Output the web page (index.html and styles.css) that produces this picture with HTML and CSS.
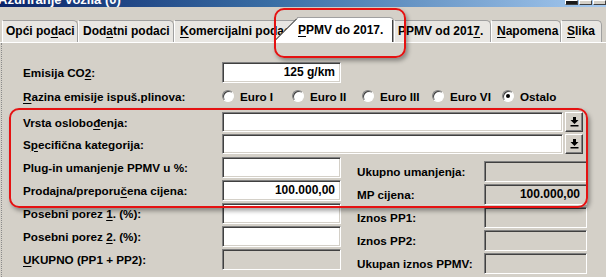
FILE: index.html
```html
<!DOCTYPE html>
<html lang="hr">
<head>
  <meta charset="UTF-8">
  <title>Ažuriranje vozila</title>
  <link rel="stylesheet" href="styles.css">
</head>
<body>

<div class="naslov">
  <span class="naslov-tekst">Ažuriranje vozila (0)</span>
  <div class="prozor-gumbi"><span></span><span></span><span></span></div>
</div>

<div class="kartice">
  <div class="kartica k1">Opći po<u>d</u>aci</div>
  <div class="kartica k2">Dod<u>a</u>tni podaci</div>
  <div class="kartica k3"><u>K</u>omercijalni podaci</div>
  <div class="kartica aktivna">
    <svg class="aktivna-oblik" width="119" height="26" viewBox="0 0 119 26">
      <path d="M0 23 L22 1 L115 1 Q118 1 118 4 L118 26 L0 26 Z" fill="#fff"/>
      <path d="M0 23.5 L22 1.5" stroke="#000" stroke-width="1"/>
      <path d="M22 0.5 L115 0.5 Q118.5 0.5 118.5 4 L118.5 25" stroke="#a0a0a0" fill="none"/>
      <path d="M117.5 3 L117.5 25" stroke="#404040"/>
    </svg>
    <span class="aktivna-tekst"><u>P</u>PMV do 2017.</span>
  </div>
  <div class="kartica k5">PPMV od 201<u>7</u>.</div>
  <div class="kartica k6"><u>N</u>apomena</div>
  <div class="kartica k7"><u>S</u>lika</div>
</div>

<div class="stranica">
  <div class="red r-emisija">
    <span class="oznaka">Emisija CO<u>2</u>:</span>
    <div class="polje">125 g/km</div>
  </div>

  <div class="red r-razina">
    <span class="oznaka"><u>R</u>azina emisije ispuš.plinova:</span>
    <label class="izbor"><span class="krug"></span>Euro I</label>
    <label class="izbor"><span class="krug"></span>Euro II</label>
    <label class="izbor"><span class="krug"></span>Euro III</label>
    <label class="izbor"><span class="krug"></span>Euro VI</label>
    <label class="izbor"><span class="krug odabran"></span>Ostalo</label>
  </div>

  <div class="red r-vrsta">
    <span class="oznaka">Vrsta oslobo<u>đ</u>enja:</span>
    <div class="polje dugo"></div>
    <div class="padajuci">
      <svg width="9" height="10" viewBox="0 0 9 10"><path d="M3 0h3v3h2.5L4.5 7 0.5 3H3z"/><rect x="0.5" y="8" width="8" height="1.5"/></svg>
    </div>
  </div>

  <div class="red r-spec">
    <span class="oznaka">S<u>p</u>ecifična kategorija:</span>
    <div class="polje dugo"></div>
    <div class="padajuci">
      <svg width="9" height="10" viewBox="0 0 9 10"><path d="M3 0h3v3h2.5L4.5 7 0.5 3H3z"/><rect x="0.5" y="8" width="8" height="1.5"/></svg>
    </div>
  </div>

  <div class="donji">
    <div class="lijevi">
      <div class="red">
        <span class="oznaka">Plug-in umanjenje PPMV u %:</span>
        <div class="polje"></div>
      </div>
      <div class="red">
        <span class="oznaka">Prodajna/preporu<u>č</u>ena cijena:</span>
        <div class="polje">100.000,00</div>
      </div>
      <div class="red">
        <span class="oznaka">Posebni porez <u>1</u>. (%):</span>
        <div class="polje"></div>
      </div>
      <div class="red">
        <span class="oznaka">Posebni porez <u>2</u>. (%):</span>
        <div class="polje"></div>
      </div>
      <div class="red">
        <span class="oznaka"><u>U</u>KUPNO (PP1 + PP2):</span>
        <div class="polje sivo"></div>
      </div>
    </div>

    <div class="desni">
      <div class="red">
        <span class="oznaka uska">Ukupno umanjenja:</span>
        <div class="polje sivo kratko"></div>
      </div>
      <div class="red">
        <span class="oznaka uska">MP cijena:</span>
        <div class="polje sivo kratko">100.000,00</div>
      </div>
      <div class="red">
        <span class="oznaka uska">Iznos PP1:</span>
        <div class="polje sivo kratko"></div>
      </div>
      <div class="red">
        <span class="oznaka uska">Iznos PP2:</span>
        <div class="polje sivo kratko"></div>
      </div>
      <div class="red">
        <span class="oznaka uska">Ukupan iznos PPMV:</span>
        <div class="polje sivo kratko"></div>
      </div>
    </div>
  </div>
</div>

<div class="crveni-okvir okvir-kartica"></div>
<div class="crveni-okvir okvir-grupa"></div>

</body>
</html>
```

FILE: styles.css
```css
* {
  box-sizing: border-box;
}
body {
  margin: 0;
  width: 606px;
  height: 277px;
  overflow: hidden;
  position: relative;
  background-color: #d4d0c8;
  font-family: "Liberation Sans", Arial, sans-serif;
  font-weight: bold;
  color: #000;
}
u {
  text-decoration-thickness: 1px;
  text-underline-offset: 2px;
}

/* naslovna traka */
.naslov {
  height: 7px;
  overflow: hidden;
  display: flex;
  justify-content: space-between;
  background: linear-gradient(to right, #0a246a, #3a6ea5 45%, #a6caf0);
}
.naslov-tekst {
  color: #fff;
  font-size: 13px;
  line-height: 13px;
  margin-top: -7px;
  margin-left: -2px;
  white-space: nowrap;
}
.prozor-gumbi {
  display: flex;
  gap: 1px;
}
.prozor-gumbi span {
  width: 13px;
  height: 5px;
  background: #d4d0c8;
  border: 1px solid;
  border-color: #fff #404040 #404040 #fff;
}
.prozor-gumbi span:first-child {
  background: linear-gradient(#d4d0c8 0 0) 3px 0 / 6px 3px no-repeat, #000;
  background: #1a1a1a;
}

/* kartice */
.kartice {
  display: flex;
  align-items: flex-end;
  height: 36px;
  padding-left: 2px;
  border-bottom: 1px solid #fff;
}
.kartica {
  flex: none;
  height: 22px;
  padding: 0 3px;
  background: #e8e6e2;
  border: 1px solid #a0a0a0;
  border-bottom: none;
  border-left-color: #fff;
  border-top-right-radius: 5px;
  font-size: 12px;
  line-height: 21px;
  white-space: nowrap;
  overflow: hidden;
}
.k1 { width: 76px; }
.k2 { width: 96px; padding-left: 4px; }
.k3 { width: 126px; padding-left: 5px; }
.k5 { width: 97px; }
.k6 { width: 70px; padding-left: 5px; }
.k7 { width: 41px; padding-left: 5px; }
.aktivna {
  position: relative;
  width: 119px;
  height: 26px;
  margin-left: -25px;
  margin-bottom: -1px;
  padding: 0 0 0 23px;
  background: none;
  border: none;
  line-height: 26px;
  overflow: visible;
}
.aktivna-oblik {
  position: absolute;
  left: 0;
  top: 0;
}
.aktivna-tekst {
  position: relative;
}

/* sadržaj */
.stranica {
  height: 234px;
  margin-left: 1px;
  border-left: 1px dotted #8a8a8a;
  padding: 19px 0 0 21px;
}
.red {
  display: flex;
  align-items: center;
}
.oznaka {
  flex: none;
  width: 199px;
  font-size: 11.7px;
  white-space: nowrap;
}
.oznaka.uska {
  width: 127px;
}
.polje {
  flex: none;
  width: 119px;
  height: 21px;
  background: #fff;
  border: 1px solid;
  border-color: #808080 #fff #fff #808080;
  box-shadow: inset 1px 1px #404040, inset -1px -1px #d4d0c8;
  text-align: right;
  padding-right: 5px;
  font-size: 12px;
  line-height: 19px;
}
.polje.dugo {
  width: 341px;
  height: 20px;
}
.polje.sivo {
  background: #d4d0c8;
}
.polje.kratko {
  width: 103px;
  padding-right: 6px;
}
.padajuci {
  flex: none;
  width: 18px;
  height: 20px;
  margin-left: 2px;
  display: flex;
  align-items: center;
  justify-content: center;
  border: 1px solid;
  border-color: #fff #404040 #404040 #fff;
  box-shadow: inset -1px -1px #808080;
}

.r-razina {
  height: 16px;
  margin-top: 5px;
}
.izbor {
  flex: none;
  width: 70px;
  display: flex;
  align-items: center;
  gap: 6px;
  font-size: 11.7px;
}
.krug {
  width: 12px;
  height: 12px;
  border-radius: 50%;
  background: #fff;
  border: 1px solid;
  border-color: #808080 #fff #fff #808080;
  box-shadow: inset 1px 1px #404040;
  position: relative;
}
.krug.odabran::after {
  content: "";
  position: absolute;
  left: 3px;
  top: 3px;
  width: 4px;
  height: 4px;
  border-radius: 50%;
  background: #000;
}
.r-vrsta {
  margin-top: 8px;
}
.r-spec {
  margin-top: 2px;
}
.donji {
  display: flex;
  margin-top: 3px;
}
.lijevi, .desni {
  display: flex;
  flex-direction: column;
  gap: 2px;
}
.desni {
  margin-left: 16px;
  padding-top: 4px;
}

/* crvene oznake preko slike */
.crveni-okvir {
  position: absolute;
  border: 2px solid #e51212;
  border-radius: 10px;
  box-shadow: 2px 3px 4px rgba(0, 0, 0, 0.35);
  pointer-events: none;
}
.okvir-kartica {
  left: 274px;
  top: 8px;
  width: 132px;
  height: 50px;
}
.okvir-grupa {
  left: 9px;
  top: 108px;
  width: 579px;
  height: 100px;
}
```
